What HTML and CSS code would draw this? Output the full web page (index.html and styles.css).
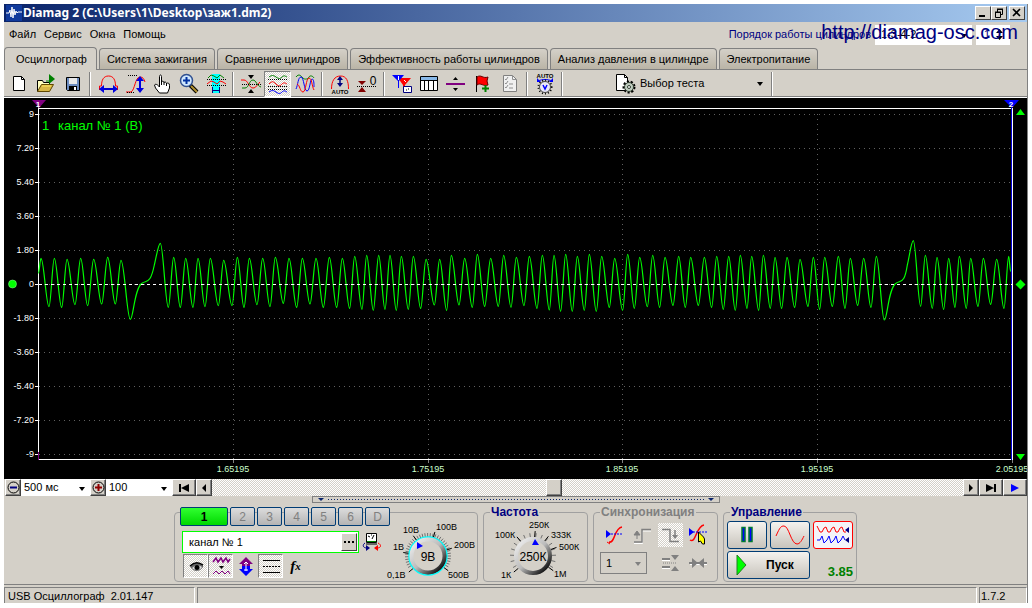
FILE: index.html
```html
<!DOCTYPE html>
<html lang="ru">
<head>
<meta charset="utf-8">
<title>Diamag 2</title>
<link rel="stylesheet" href="styles.css">
</head>
<body>
<div class="window">
  <header class="titlebar">
    <svg class="app-icon" width="16" height="16" viewBox="0 0 16 16"><rect width="16" height="16" fill="#103a9c"/><path d="M0 8h3l1-3 1 7 1-10 1 11 1-9 1 6 1-4 1 2 1-1h4" fill="none" stroke="#fff"/></svg>
    <h1 class="title">Diamag 2 (C:\Users\1\Desktop\заж1.dm2)</h1>
    <div class="window-buttons">
      <button class="win-btn" aria-label="Свернуть"><svg width="12" height="10" viewBox="0 0 12 10"><path d="M2 8h6" stroke="#000" stroke-width="2"/></svg></button>
      <button class="win-btn" aria-label="Восстановить"><svg width="12" height="10" viewBox="0 0 12 10"><path d="M4 1h6M4 1.500h6M9.500 1v5.500h-2M4.500 2v2M2 4h6M2 4.500h6M2.500 4v5.500h5v-5" fill="none" stroke="#000"/></svg></button>
      <button class="win-btn win-close" aria-label="Закрыть"><svg width="12" height="10" viewBox="0 0 12 10"><path d="M2 1l7 7M9 1l-7 7" stroke="#000" stroke-width="1.600"/></svg></button>
    </div>
  </header>

  <div class="menubar">
    <nav class="menu"><a href="#">Файл</a><a href="#">Сервис</a><a href="#">Окна</a><a href="#">Помощь</a></nav>
    <div class="order">
      <label for="order">Порядок работы цилиндров</label>
      <span class="drop order-drop"><select id="order"><option>1-3-4-2</option></select></span>
      <span class="spin"><input aria-label="Номер цилиндра" value="1"><svg width="7" height="11" viewBox="0 0 7 11"><path d="M0 4h7L3.500 0zM0 7h7l-3.500 4z"/></svg></span>
    </div>
    <div class="watermark">http://diamag-osc.com</div>
  </div>

  <nav class="tabs">
    <button class="tab active">Осциллограф</button>
    <button class="tab">Система зажигания</button>
    <button class="tab">Сравнение цилиндров</button>
    <button class="tab">Эффективность работы цилиндров</button>
    <button class="tab">Анализ давления в цилиндре</button>
    <button class="tab">Электропитание</button>
  </nav>

  <div class="toolbar">
    <button class="tool" aria-label="Новый"><svg viewBox="0 0 24 24"><path d="M6.500 4.500h8l3 3v11h-11z" fill="#fff" stroke="#000"/><path d="M14.500 4.500v3h3" fill="none" stroke="#000"/></svg></button>
    <button class="tool" aria-label="Открыть"><svg viewBox="0 0 24 24"><path d="M3.500 19.500v-11h5l1 2h6v3" fill="#ffffc0" stroke="#000"/><path d="M3.500 19.500l4-7h12l-4 7z" fill="#d8b848" stroke="#604800"/><path d="M8 14h9" stroke="#ffe860"/><path d="M15 2l6 5-6 5z" fill="#008000"/><path d="M12 9h4" stroke="#008000"/></svg></button>
    <button class="tool" aria-label="Сохранить"><svg viewBox="0 0 24 24"><path d="M5.500 5.500h13v13h-12l-1-1z" fill="#6c8cc0" stroke="#000"/><path d="M8 6h8v6h-8z" fill="#e8e8e8"/><path d="M8 14h8v4h-8z" fill="#000"/><path d="M13 15h2v3h-2z" fill="#fff"/></svg></button>
    <span class="sep"></span>
    <button class="tool" aria-label="Масштаб по времени"><svg viewBox="0 0 24 24"><path d="M3.500 18V14h2c0-6 2-10 7-10s7 4 7 10h2v4" fill="none" stroke="red"/><path d="M6 17h13" stroke="#0000d0" stroke-width="2"/><path d="M3 17l5-4v8zM22 17l-5-4v8z" fill="#0000e0"/></svg></button>
    <button class="tool" aria-label="Масштаб по уровню"><svg viewBox="0 0 24 24"><path d="M3 20h5c4-2 4-15 9-15 3 0 4 2 5 5" fill="none" stroke="red"/><path d="M5 3.500h10M4 20.500h8" stroke="#000" stroke-dasharray="1 1"/><path d="M17 7v12" stroke="#0000e0" stroke-width="2"/><path d="M17 4l4 5h-8zM17 21l4-5h-8z" fill="#0000e0"/></svg></button>
    <button class="tool" aria-label="Рука"><svg viewBox="0 0 24 24"><path d="M9.500 14V4.500c0-2 2-2 2 0V10c1-1.500 2-1 2.500.5 1-1 2-.5 2.500 1 1.500-1 3-.5 3 2V16l-2 5h-8l-4-5-1-3c1-1.500 3-.5 5 2z" fill="#fff" stroke="#000"/><path d="M11.500 9v4M14 10v3M16.500 11v3" stroke="#000"/></svg></button>
    <button class="tool" aria-label="Лупа"><svg viewBox="0 0 24 24"><path d="M13 13l7 7" stroke="#000" stroke-width="4"/><path d="M14 14l6 6" stroke="#b09030" stroke-width="2"/><circle cx="9.500" cy="8.500" r="6" fill="#d0e8ff" stroke="#305090" stroke-width="1.500"/><path d="M6 8.500h7M9.500 5v7" stroke="#0030a0" stroke-width="2"/></svg></button>
    <button class="tool" aria-label="Курсоры"><svg viewBox="0 0 24 24"><path d="M8 2h8v19H8z" fill="cyan"/><path d="M4 6l3-3 3 1 3 2 3-3 4 3" fill="none" stroke="#008000"/><path d="M3 7.500h19M3 13.500h19" stroke="#000" stroke-dasharray="1 1"/><path d="M3 12l4-3 3 1 3 2 3-3 3 1 3 2" fill="none" stroke="red"/><path d="M8.500 15v6M15.500 15v6M8 18.500h8" stroke="#000080"/></svg></button>
    <span class="sep"></span>
    <button class="tool" aria-label="Совместить"><svg viewBox="0 0 24 24"><path d="M2 8h3c4 0 5 8 9 8 3 0 4-3 7-6" fill="none" stroke="red"/><path d="M3 16h3c4 0 4-8 8-8 3 0 4 6 8 7" fill="none" stroke="#008000"/><path d="M3 12.500h19" stroke="#000" stroke-dasharray="1 1"/><path d="M9 3h6l-3 4zM9 21h6l-3-4z"/></svg></button>
    <button class="tool pressed" aria-label="Разделить"><svg viewBox="0 0 24 24"><g fill="none"><path d="M3 5c3-2 4-2 7 0s4 2 6 0 3-1 5 0" stroke="#008000"/><path d="M3 12c3-3 4-3 7 0s4 2 6 0 3-1 5 0" stroke="red"/><path d="M3 20c3-2 4-2 7 0s4 2 6 0 3-1 5 0" stroke="#00f"/><path d="M2 7.500h20M2 14.500h20M2 17.500h20" stroke="#000" stroke-dasharray="1 1"/></g></svg></button>
    <button class="tool" aria-label="Наложить"><svg viewBox="0 0 24 24"><g fill="none"><path d="M3 5c3-4 5-1 7 1s5 1 6-1 4-1 5 1" stroke="#008000"/><path d="M3 17c2-4 2-12 5-12s3 14 6 14 3-12 5-12 2 5 2 8" stroke="#00f"/><path d="M4 12c3 1 3 8 6 8s3-14 6-14 3 9 5 12" stroke="red"/></g></svg></button>
    <span class="sep"></span>
    <button class="tool" aria-label="Автомасштаб"><svg viewBox="0 0 24 24"><path d="M3.500 17c0-8 3-13 9-13s8 5 8 13" fill="none" stroke="red"/><path d="M12 6v7" stroke="#000080" stroke-width="1.500"/><path d="M12 4l3 4H9zM12 15l3-4H9z" fill="#000080"/><text x="12" y="22" class="t-auto">AUTO</text></svg></button>
    <button class="tool" aria-label="Ноль"><svg viewBox="0 0 24 24"><path d="M3 9h8l-4 4zM3 20h8l-4-5z" fill="#800000"/><path d="M2 14.500h20" stroke="#000" stroke-dasharray="1 1"/><text x="18" y="13" class="t-zero">0</text></svg></button>
    <span class="sep"></span>
    <button class="tool" aria-label="Маркеры"><svg viewBox="0 0 24 24"><path d="M8 6h13l-6 7v5h-2v-5z" fill="red"/><path d="M2 3h12l-5 6v7H8V9z" fill="#00f"/><path d="M8.500 4v4M14 8l2 2" stroke="#fff"/><path d="M13.500 14.500h8v6h-8z" fill="#fff" stroke="#000080"/><path d="M16 18h1M18 17h1" stroke="#000"/></svg></button>
    <button class="tool" aria-label="Таблица"><svg viewBox="0 0 24 24"><path d="M3.500 4.500h17v14h-17z" fill="#fff" stroke="#000"/><path d="M4 5h16v3H4z" fill="#88b8e8"/><path d="M3 8.500h18M7.500 8v10M11.500 8v10M16.500 8v10" stroke="#000"/></svg></button>
    <button class="tool" aria-label="Раздвинуть"><svg viewBox="0 0 24 24"><path d="M2 12h19" stroke="#800080" stroke-width="2"/><path d="M9 8h5l-2.500-3zM9 16h5l-2.500 3z"/></svg></button>
    <button class="tool" aria-label="Флаг"><svg viewBox="0 0 24 24"><path d="M5.500 4v16" stroke="#000" stroke-width="1"/><path d="M6 5c4-3 6 2 11 0l-1 4 1 4c-5 2-7-3-11 0z" fill="red" stroke="#600"/><path d="M11 16.500h7M14.500 13v7" stroke="#008000" stroke-width="2"/></svg></button>
    <button class="tool" aria-label="Список"><svg viewBox="0 0 24 24"><path d="M5.500 3.500h9l4 4v12h-13z" fill="#f0f0f0" stroke="#808080"/><path d="M14.500 3.500v4h4M7 7l1 1 2-3M7 11l1 1 2-3M7 15l1 1 2-3M11 12h4M11 16h4" fill="none" stroke="#909090"/></svg></button>
    <span class="sep"></span>
    <button class="tool" aria-label="Авто"><svg viewBox="0 0 24 24"><text x="12" y="6" class="t-auto">AUTO</text><path d="M5 9c4-2 10-2 14 0" fill="none" stroke="#00f"/><path d="M4 6v4h4zM20 6v4h-4z" fill="#00f"/><circle cx="12" cy="15" r="6.500" fill="none" stroke="#000" stroke-width="2" stroke-dasharray="1 2"/><circle cx="12" cy="15" r="5.500" fill="#e8e8f8" stroke="#444"/><path d="M10 13l2 4 2-4" fill="none" stroke="#00f" stroke-width="1.500"/></svg></button>
    <span class="sep"></span>
    <button class="test-btn"><svg width="22" height="22" viewBox="0 0 22 22"><path d="M2.500 1.500h8l3 3v13h-11z" fill="#fff" stroke="#000"/><path d="M10.500 1.500v3h3" fill="none" stroke="#000"/><circle cx="15" cy="14" r="5" fill="none" stroke="#000" stroke-width="3" stroke-dasharray="2 1.500"/><circle cx="15" cy="14" r="4.500" fill="#c0ccc0" stroke="#304030"/><circle cx="15" cy="14" r="1.500" fill="#fff" stroke="#304030"/></svg><span>Выбор теста</span><i class="caret"></i></button>
    <span class="sep"></span>
  </div>

  <svg class="plot" viewBox="5 98 1022 381">
    <rect x="5" y="98" width="1022" height="381" fill="#000"/>
    <g id="grid"></g>
    <path d="M38.500 104v356M38 108.500h974" stroke="#fff" fill="none"/>
    <path d="M38 459.500h974" stroke="#fff"/>
    <path d="M38.500 452v8" stroke="#800080"/>
    <path d="M1011.500 106v354" stroke="#0000d8"/><path d="M1012.500 108v352" stroke="#fff"/>
    <path id="wave" fill="none" stroke="#0f0" stroke-width="1.200"/>
    <path d="M39 284.500h973" stroke="#fff" stroke-dasharray="3 3"/>
    <path d="M32 100h14l-7 8z" fill="#800080"/><text x="38" y="107" class="mark">1</text>
    <path d="M1004 100h15l-7 8z" fill="#00f"/><text x="1011" y="107" class="mark">2</text>
    <path d="M1016 115h9l-4.500-6zM1016 454h9l-4.500 6z" fill="#0f0"/>
    <path d="M1020.500 279.500l5 5-5 5-5-5z" fill="#0f0"/>
    <circle cx="12.500" cy="284" r="4" fill="#0f0" stroke="#90ff90" stroke-width=".5"/>
    <text x="42" y="130" class="channel">1</text><text x="58" y="130" class="channel">канал № 1 (В)</text>
  </svg>

  <div class="scrollbar">
    <button class="bar-btn zoom" aria-label="Уменьшить"><svg width="13" height="13" viewBox="0 0 13 13"><circle cx="6.500" cy="6.500" r="5.500" fill="none" stroke="#000"/><path d="M3 6.500h7" stroke="#000080" stroke-width="2"/></svg></button>
    <span class="drop time-drop"><select aria-label="Развёртка"><option>500 мс</option></select></span>
    <button class="bar-btn zoom" aria-label="Увеличить"><svg width="13" height="13" viewBox="0 0 13 13"><circle cx="6.500" cy="6.500" r="5.500" fill="none" stroke="#000"/><path d="M3 6.500h7M6.500 3v7" stroke="#900000" stroke-width="2"/></svg></button>
    <span class="drop scale-drop"><select aria-label="Масштаб"><option>100</option></select></span>
    <button class="bar-btn wide" aria-label="В начало"><svg width="12" height="8" viewBox="0 0 12 8"><path d="M1 0h2v8H1zM11 0v8L3 4z"/></svg></button>
    <button class="bar-btn" aria-label="Назад"><svg width="6" height="8" viewBox="0 0 6 8"><path d="M5 0v8L1 4z"/></svg></button>
    <input class="scroll" type="range" aria-label="Прокрутка" min="0" max="1000" value="454">
    <button class="bar-btn" aria-label="Вперёд"><svg width="6" height="8" viewBox="0 0 6 8"><path d="M1 0v8l4-4z"/></svg></button>
    <button class="bar-btn wide" aria-label="В конец"><svg width="12" height="8" viewBox="0 0 12 8"><path d="M9 0h2v8H9zM1 0v8l8-4z"/></svg></button>
    <button class="bar-btn wide" aria-label="Воспроизвести"><svg width="10" height="8" viewBox="0 0 10 8"><path d="M1 0v8l8-4z" fill="#00f"/></svg></button>
  </div>

  <div class="splitter"><i></i><span></span><i></i></div>

  <main class="panel">
    <section class="group channel-group">
      <div class="channel-side">
        <div class="channels"><button class="ch on">1</button><button class="ch">2</button><button class="ch">3</button><button class="ch">4</button><button class="ch">5</button><button class="ch">6</button><button class="ch">D</button></div>
        <div class="name-row">
          <div class="name-box"><input aria-label="Имя канала" value="канал № 1"><button class="dots" aria-label="Выбрать"><svg width="10" height="2" viewBox="0 0 10 2"><path d="M0 0h2v2H0zM4 0h2v2H4zM8 0h2v2H8z"/></svg></button></div>
          <button class="flat" aria-label="Прибор"><svg width="20" height="20" viewBox="0 0 20 20"><path d="M4.500 1.500h10v9h-10z" fill="#fff" stroke="#000"/><path d="M5 9.500h9" stroke="#080" /><path d="M6 4l2 1M12 3l-2 4M9 3h1" stroke="#000"/><path d="M4 11h11v2H4z" fill="#666"/><path d="M3 11c-3 2-2 5 2 5" fill="none" stroke="#000080"/><path d="M4 13l4 3-4 3z" fill="#000080"/><path d="M16 11c4 2 3 5-1 5" fill="none" stroke="red"/><path d="M16 13l-4 3 4 3z" fill="red"/></svg></button>
        </div>
        <div class="modes">
          <button class="mode pressed" aria-label="Показать"><svg viewBox="0 0 24 24"><path d="M6 12c4-4 9-4 13-1v2c-4 6-10 5-13-1z" fill="#666"/><path d="M6 12c4-4 9-4 13-1" fill="none" stroke="#000" stroke-width="1.500"/><path d="M8 14c4-3 6-3 10-1-2 4-7 4-10 1z" fill="#ddd"/><circle cx="13" cy="13.500" r="2.500"/></svg></button>
          <button class="mode pressed" aria-label="Фильтр"><svg viewBox="0 0 24 24"><path d="M4 8l3-4 2 4 3-4 2 4 3-4 2 4 2-3" fill="none" stroke="#800080" stroke-width="1.500"/><path d="M10 12h5l-2.500 3z"/><path d="M4 20l3-3 3 3 3-3 3 3 3-3 2 3" fill="none" stroke="#800080"/></svg></button>
          <button class="mode" aria-label="Инверсия"><svg viewBox="0 0 24 24"><path d="M12 3l7 7h-3v3H8v-3H5z" fill="#800080"/><path d="M12 22l7-7h-3v-3H8v3H5z" fill="#00f"/><path d="M12 8v9M10 10l2-2 2 2M10 16h4" fill="none" stroke="#fff"/></svg></button>
          <button class="mode pressed" aria-label="Линии"><svg viewBox="0 0 24 24"><path d="M4 6.500h17M4 18.500h17" stroke="#000"/><path d="M4 12.500h17" stroke="#000" stroke-dasharray="2 1"/></svg></button>
          <button class="mode fx"><i>f</i><sub>x</sub></button>
        </div>
      </div>
      <svg class="knob" width="92" height="62" viewBox="385 521 92 62">
        <g id="ticks-volts"></g>
        <circle cx="429" cy="556" r="19" fill="url(#metal-face)" stroke="cyan" stroke-width="1.500"/>
        <circle cx="429" cy="556" r="16.500" fill="#d4d0c8" stroke="url(#metal-rim)" stroke-width="4"/>
        <path d="M418 542l6 4-6 3z" fill="#00f"/>
        <text x="429" y="561" class="knob-value">9В</text>
        <g class="scale"><text x="404" y="533">10В</text><text x="437" y="530">100В</text><text x="394" y="550">1В</text><text x="455" y="548">200В</text><text x="388" y="578">0,1В</text><text x="449" y="578">500В</text></g>
        <defs>
          <linearGradient id="metal-face" x1="0" y1="0" x2="1" y2="1"><stop offset="0" stop-color="#fff"/><stop offset="1" stop-color="#222"/></linearGradient>
          <linearGradient id="metal-rim" x1="0" y1="0" x2="1" y2="1"><stop offset="0" stop-color="#f4f4f4"/><stop offset=".5" stop-color="#bbb"/><stop offset=".9" stop-color="#111"/></linearGradient>
        </defs>
      </svg>
    </section>

    <fieldset class="group freq">
      <legend>Частота</legend>
      <svg class="knob" width="100" height="62" viewBox="486 519 100 62">
        <g id="ticks-freq"></g>
        <circle cx="533" cy="556" r="17" fill="#d4d0c8" stroke="url(#metal-rim)" stroke-width="4"/>
        <path d="M535 539l4 6h-7z" fill="#00f"/>
        <text x="533" y="561" class="knob-value">250К</text>
        <g class="scale"><text x="529" y="528">250К</text><text x="495" y="538">100К</text><text x="551" y="538">333К</text><text x="559" y="550">500К</text><text x="501" y="578">1К</text><text x="554" y="577">1М</text></g>
      </svg>
    </fieldset>

    <fieldset class="group sync">
      <legend>Синхронизация</legend>
      <div class="sync-grid">
        <button class="mode" aria-label="Уровень"><svg viewBox="0 0 24 24"><path d="M7 19c6 2 5-14 13-15" fill="none" stroke="red" stroke-width="1.500"/><path d="M5 19l3 2" stroke="red"/><path d="M9 11h12" stroke="#00f" stroke-dasharray="2 1"/><path d="M4 7v8l5-4z" fill="#00f"/></svg></button>
        <button class="mode" aria-label="Фронт"><svg viewBox="0 0 24 24"><path d="M4 20.500h8.500V8H21" fill="none" stroke="#fff"/><path d="M4 19h8V6.500h9" fill="none" stroke="#808080" stroke-width="1.500"/><path d="M4 12h6l-3-4zM7 10v6" fill="#808080" stroke="#808080"/></svg></button>
        <button class="mode pressed-flat" aria-label="Спад"><svg viewBox="0 0 24 24"><path d="M4 6.500h8v12h9M17 7v8" fill="none" stroke="#808080" stroke-width="1.500"/><path d="M14 12h6l-3 4z" fill="#808080"/></svg></button>
        <button class="mode" aria-label="Курсор"><svg viewBox="0 0 24 24"><path d="M4 17c6 4 6-14 14-15" fill="none" stroke="red" stroke-width="1.500"/><path d="M7 9h14" stroke="#00f" stroke-dasharray="2 1"/><path d="M3 5v8l5-4z" fill="#00f"/><path d="M12.500 9v10l2-1 2 3h2v-5l-1-2z" fill="#ff0" stroke="#000"/></svg></button>
        <span class="drop sync-drop"><select aria-label="Канал синхронизации" disabled><option>1</option></select></span>
        <button class="mode" aria-label="Сжать"><svg viewBox="0 0 24 24"><path d="M4 8h8M4 16h8" stroke="#808080" stroke-width="2"/><path d="M5 12h14" stroke="#808080" stroke-dasharray="1 1"/><path d="M4 9.500h8M4 17.500h8" stroke="#fff"/><path d="M13 4h8l-4 5zM13 20h8l-4-5z" fill="#808080"/></svg></button>
        <button class="mode" aria-label="Свести"><svg viewBox="0 0 24 24"><path d="M4 13.500h17" stroke="#fff"/><path d="M3 12h18" stroke="#808080" stroke-width="2"/><path d="M6 7l6 5-6 5zM18 7l-6 5 6 5z" fill="#808080"/></svg></button>
      </div>
    </fieldset>

    <fieldset class="group control">
      <legend>Управление</legend>
      <div class="control-grid">
        <button class="big" aria-label="Пауза"><svg width="14" height="18" viewBox="0 0 14 18"><path d="M2 1.500h3v14H2zM9 1.500h3v14H9z" fill="#00f" stroke="#007a30" stroke-width="1.500"/></svg></button>
        <button class="big" aria-label="Синус"><svg width="32" height="22" viewBox="0 0 32 22"><path d="M2 12C6 3 7 2 10 2c5 0 7 18 13 18 3 0 5-4 7-8" fill="none" stroke="red"/></svg></button>
        <button class="big red" aria-label="Сигналы"><svg width="34" height="22" viewBox="0 0 34 22"><path d="M1 2l3 6 2 0 2-4 2-1 2 5 2 0 2-4 2-1 2 5 2 0 2-4 2-1 2 5h2" fill="none" stroke="red"/><path d="M1 16h3l2-4 2 7 3-3 2-4 2 7 3-3 2-4 2 7 3-3 2-4 2 4" fill="none" stroke="#00f"/><path d="M33 3v6l-4-3zM33 13v6l-4-3z" fill="#000080"/></svg></button>
        <button class="big start"><svg width="12" height="22" viewBox="0 0 12 22"><path d="M1 1l9 10-9 10z" fill="#0f0" stroke="#208020"/></svg><span>Пуск</span></button>
        <output class="value">3.85</output>
      </div>
    </fieldset>
  </main>

  <footer class="status"><span class="cell first">USB Осциллограф&nbsp; 2.01.147</span><span class="cell grow"></span><span class="cell last">1.7.2</span></footer>
</div>
<script src="plot.js"></script>
</body>
</html>
```
FILE: styles.css
```css
* { box-sizing: border-box; }
body { margin: 0; padding: 4px 4px 5px; background: #fff; color: #000; font: 11px/13px "Liberation Sans", sans-serif; }
button, input, select { font: inherit; color: inherit; margin: 0; padding: 0; border: 0; border-radius: 0; background: none; }
button { display: flex; align-items: center; justify-content: center; flex: none; }
svg { display: block; flex: none; }
.window { background: #d4d0c8; border-right: 1px solid #808080; }

.titlebar { display: flex; align-items: center; height: 18px; padding: 0 2px; background: linear-gradient(90deg, #0a246a, #a6caf0); }
.title { flex: 1; margin: 0 1px; color: #fff; font: bold 12px/16px "Noto Sans", sans-serif; }
.window-buttons { display: flex; }
.win-btn, .bar-btn, .dots { background: #d4d0c8; border: 1px solid; border-color: #fff #404040 #404040 #fff; }
.win-btn { width: 16px; height: 14px; }
.win-close { margin-left: 2px; }

.menubar { position: relative; display: flex; justify-content: space-between; align-items: center; height: 25px; padding: 0 17px 0 5px; }
.menu { display: flex; gap: 8px; }
.menu a { color: #000; text-decoration: none; }
.order { display: flex; align-items: center; gap: 4px; color: #000080; }
.drop { position: relative; display: block; background: #fff; }
.drop select { display: block; width: 100%; height: 100%; appearance: none; padding-left: 3px; color: #000; opacity: 1; }
.drop::after, .caret { content: ""; border: 3px solid transparent; border-top: 4px solid #000; border-bottom: 0; }
.drop::after { position: absolute; right: 5px; top: 50%; margin-top: -1px; pointer-events: none; }
.order-drop { width: 97px; height: 20px; }
.order-drop select { padding-left: 6px; }
.spin { display: flex; align-items: center; width: 34px; height: 20px; padding: 0 7px 0 8px; background: #fff; }
.spin input { flex: 1; min-width: 0; }
.watermark { position: absolute; right: 9px; top: 0; color: #000080; font: 20px/20px "Liberation Sans", sans-serif; pointer-events: none; }

.tabs { display: flex; align-items: flex-end; gap: 2px; height: 23px; border-bottom: 1px solid #808080; }
.tab { height: 21px; padding: 0 7px; border: 1px solid #808080; border-bottom: 0; border-radius: 4px 4px 0 0; background: linear-gradient(#d4d0c8, #bab4a6); }
.tab.active { height: 23px; margin-bottom: -1px; padding: 0 9px 0 11px; background: #d4d0c8; }

.toolbar { display: flex; height: 28px; padding-left: 1px; align-items: center; border-bottom: 1px solid #fff; box-shadow: inset 0 -1px #808080; }
.tool { width: 27px; height: 26px; }
.tool svg, .mode svg { width: 24px; height: 24px; }
.sep { width: 2px; height: 24px; margin: 0 3px; border-left: 1px solid #808080; border-right: 1px solid #fff; }
.pressed, .pressed-flat, .scroll { background: repeating-conic-gradient(#fff 0 25%, #d4d0c8 0 50%) 0 0 / 2px 2px; }
.pressed { border: 1px solid; border-color: #808080 #fff #fff #808080; }
.t-auto { font: bold 6px "Liberation Sans", sans-serif; text-anchor: middle; }
.t-zero { font: 12px "Liberation Sans", sans-serif; text-anchor: middle; }
.test-btn { width: 202px; height: 26px; padding: 0 5px 0 48px; gap: 4px; justify-content: flex-start; }
.test-btn .caret { margin-left: auto; }

.plot { width: 100%; height: auto; padding-left: 1px; background: #000; }
.mark { font: bold 8px "Liberation Sans", sans-serif; fill: #fff; text-anchor: middle; }
.channel { font: 13px "Liberation Sans", sans-serif; fill: #0f0; }
.axis { font: 9px "Liberation Sans", sans-serif; fill: #fff; text-anchor: end; }
.axis.time { fill: #ccffcc; text-anchor: middle; }

.scrollbar { display: flex; height: 17px; padding-left: 1px; }
.bar-btn { width: 16px; height: 17px; box-shadow: inset -1px -1px #808080; }
.bar-btn.wide { width: 24px; }
.time-drop { width: 69px; }
.scale-drop { width: 66px; }
.scroll { flex: 1; min-width: 0; height: 17px; appearance: none; }
.scroll::-webkit-slider-thumb { appearance: none; width: 16px; height: 17px; background: #d4d0c8; border: 1px solid; border-color: #fff #404040 #404040 #fff; box-shadow: inset -1px -1px #808080; }

.splitter { display: flex; align-items: center; gap: 4px; width: 408px; max-width: 100%; height: 7px; margin: 0 auto; padding: 0 5px; border: 1px solid #808080; }
.splitter i { border: 3px solid transparent; border-top: 3px solid #0a246a; border-bottom: 0; }
.splitter span { flex: 1; height: 1px; background: repeating-linear-gradient(90deg, #0a246a 0 1px, transparent 1px 3px); }

.panel { display: flex; justify-content: center; gap: 5px; height: 81px; padding-top: 3px; }
.group { margin: 0; padding: 0; min-width: 0; height: 76px; border: 1px solid #a0a0a0; border-radius: 4px; }
.group legend { margin-left: 6px; padding: 0 1px; color: #000080; font: bold 12px/13px "Liberation Sans", sans-serif; }
.channel-group { display: flex; width: 304px; height: 70px; margin-top: 6px; padding-left: 5px; }
.channel-side { width: 204px; }
.channels { display: flex; gap: 2px; width: 210px; margin-top: -6px; }
.ch { width: 25px; height: 19px; color: #808080; border: 1px solid #003c74; border-radius: 2px; background: linear-gradient(#dcdcdc, #b4b4b4); font: 12px/14px "Liberation Sans", sans-serif; }
.ch.on { width: 48px; color: #000; font-weight: bold; background: linear-gradient(#30ff30, #00d800); }
.name-row { display: flex; align-items: center; gap: 3px; margin: 5px 0 0 2px; }
.name-box { display: flex; width: 177px; height: 22px; padding: 1px; border: 1px solid #0f0; background: #fff; }
.name-box input { flex: 1; min-width: 0; padding-left: 5px; font: 11px/13px "Liberation Sans", sans-serif; }
.dots { width: 16px; height: 18px; }
.modes { display: flex; margin: 1px 0 0 3px; }
.mode { width: 25px; height: 24px; }
.fx { font: italic bold 15px/18px "Liberation Serif", serif; }
.fx sub { font-size: 11px; }
.knob { overflow: visible; }
.channel-group .knob { margin-top: 8px; }
.scale text { font: 9px "Liberation Sans", sans-serif; }
.knob-value { font: 12px "Liberation Sans", sans-serif; text-anchor: middle; }
.freq { width: 105px; }
.freq .knob { margin: 0 0 0 2px; }
.sync { width: 125px; }
.sync legend { color: #808080; }
.sync-grid { display: grid; grid-template-columns: repeat(4, 28px); gap: 4px 0; padding: 4px 0 0 6px; align-items: center; justify-items: center; }
.sync-drop { grid-column: span 2; justify-self: start; width: 47px; height: 22px; background: #d4d0c8; border: 1px solid #808080; }
.sync-drop select { padding-left: 5px; }
.sync-drop::after { border-top-color: #808080; }
.control { width: 134px; }
.control-grid { display: grid; grid-template-columns: repeat(3, 40px); gap: 2px 3px; padding: 2px 3px 0; }
.big { height: 28px; border: 1px solid #003c74; border-radius: 3px; background: linear-gradient(#f4f2ee, #c8c4bc); }
.big.red { border: 1px solid red; background: #f4f4f8; }
.start { grid-column: span 2; justify-content: flex-start; gap: 18px; padding-left: 8px; font: bold 12px/14px "Liberation Sans", sans-serif; }
.value { align-self: end; justify-self: end; color: #008000; font: bold 13px/14px "Liberation Sans", sans-serif; }

.status { display: flex; gap: 2px; height: 19px; padding: 2px 0 0; border-top: 1px solid #808080; }
.cell { padding: 2px 3px 0; border: 1px solid; border-color: #808080 #fff #fff #808080; border-bottom: 0; }
.first { width: 191px; }
.grow { flex: 1; }
.last { width: 48px; padding-left: 1px; }
```
FILE: plot.js
```js
const zero = 284;
// Local extrema of the signal as [x, y] in thirds of a pixel; y counts from 220.
const left = [[115,160],[123,115],[147,260],[163,115],[185,262],[201,118],[225,254],[242,115],[263,257],[281,118],[305,252],[323,112],[346,252],[363,121],[391,298]];
const middle = [[481,70],[505,262],[521,112],[541,262],[557,115],[579,262],[594,115],[615,260],[631,115],[655,257],[671,121],[696,257],[712,112],[732,262],[748,115],[771,254],[788,115],[810,260],[826,112],[850,250],[867,115],[890,262],[907,115],[930,252],[948,115],[970,262],[988,112],[1010,262],[1027,115],
[1049,265],[1064,109],[1086,268],[1100,106],[1120,271],[1136,106],[1155,268],[1170,106],[1189,271],[1204,109],[1225,268],[1240,109],[1262,265],[1278,118],[1303,255],[1319,118],[1340,271],[1354,106],[1377,255],[1394,115],[1417,262],[1432,103],[1454,259],[1472,115],[1495,259],[1511,106],[1533,262],[1549,112],[1572,257],[1588,109],[1611,265],[1627,106],[1648,270],[1662,106],[1682,274],[1697,103],[1717,274],[1732,109],[1753,271],[1768,103],[1789,274],[1805,109],[1828,262],[1844,115],[1868,271],[1883,103],[1903,265],[1919,112],[1942,260],[1958,106],[1979,262],[1995,112],[2019,256],[2036,109],
[2056,262],[2072,112],[2095,256],[2113,112],[2135,262],[2150,109],[2170,268],[2186,109],[2206,271],[2221,106],[2241,265],[2255,109],[2276,271],[2290,106],[2311,265],[2325,112],[2345,265],[2361,112],[2384,262],[2400,118],[2424,259],[2440,112],[2459,268],[2474,112],[2497,259],[2515,109],[2535,265],[2551,115],[2573,256],[2591,115],[2613,262],[2629,109],[2653,300]];
const right = [[2740,62],[2762,259],[2776,106],[2797,265],[2811,112],[2831,268],[2846,115],[2865,262],[2878,109],[2899,265],[2912,115],[2934,259],[2950,115],[2972,253],[2990,118],[3012,265],[3026,109],[3032,155]];
const at = ([x, y]) => [x / 3, 220 + y / 3];
function swing(points) {
  let d = "", [px, py] = at(points[0]);
  for (const p of points.slice(1)) {
    const [x, y] = at(p), k = (x - px) * 0.36;
    d += `C${px + k} ${py} ${x - k} ${y} ${x} ${y}`;
    [px, py] = [x, y];
  }
  return d;
}
function spark(from, to) {
  const [x, y] = at(from), [ex, ey] = at(to);
  return `C${x + 3} ${y} ${x + 4} ${zero + 3} ${x + 12} ${zero - 1}`
    + `C${x + 17} ${zero - 4} ${x + 20} ${zero} ${ex - 6} ${zero - 19}`
    + `C${ex - 4} ${zero - 27} ${ex - 2} ${ey} ${ex} ${ey}`;
}
const start = at(left[0]);
document.getElementById("wave").setAttribute("d", `M${start}` + swing(left) + spark(left.at(-1), middle[0]) + swing(middle) + spark(middle.at(-1), right[0]) + swing(right));

let grid = "";
["9", "7.20", "5.40", "3.60", "1.80", "0", "-1.80", "-3.60", "-5.40", "-7.20", "-9"].forEach((label, i) => {
  const y = 114 + i * 34;
  grid += `<path d="M39 ${y + .5}h972" stroke="#606060" stroke-dasharray="1 4"/><path d="M35 ${y + .5}h4" stroke="#fff"/><text class="axis" x="34" y="${y + 3}">${label}</text>`;
});
[[233, "1.65195"], [428, "1.75195"], [622, "1.85195"], [817, "1.95195"], [1012, "2.05195"]].forEach(([x, label]) => {
  grid += `<path d="M${x + .5} 114v345" stroke="#606060" stroke-dasharray="1 4"/><path d="M${x + .5} 458v5" stroke="#808080"/><text class="axis time" x="${x}" y="472">${label}</text>`;
});
document.getElementById("grid").innerHTML = grid;

function ticks(id, cx, cy, r0, r1, minor, major) {
  const line = (deg, a, b, c) => {
    const t = deg * Math.PI / 180;
    return `<path d="M${cx + a * Math.sin(t)} ${cy - a * Math.cos(t)}L${cx + b * Math.sin(t)} ${cy - b * Math.cos(t)}" stroke="${c}"/>`;
  };
  let out = "";
  for (let deg = -120; deg <= 120; deg += minor) out += line(deg, r0, r1, "#707070");
  for (const deg of major) out += line(deg, r0, r1 + 2, "#000");
  document.getElementById(id).innerHTML = out;
}
ticks("ticks-volts", 429, 556, 19, 23, 7, [-130, -82, -36, 16, 72, 126]);
ticks("ticks-freq", 533, 556, 19, 23, 16, [-130, -40, 5, 38, 70, 126]);
```
